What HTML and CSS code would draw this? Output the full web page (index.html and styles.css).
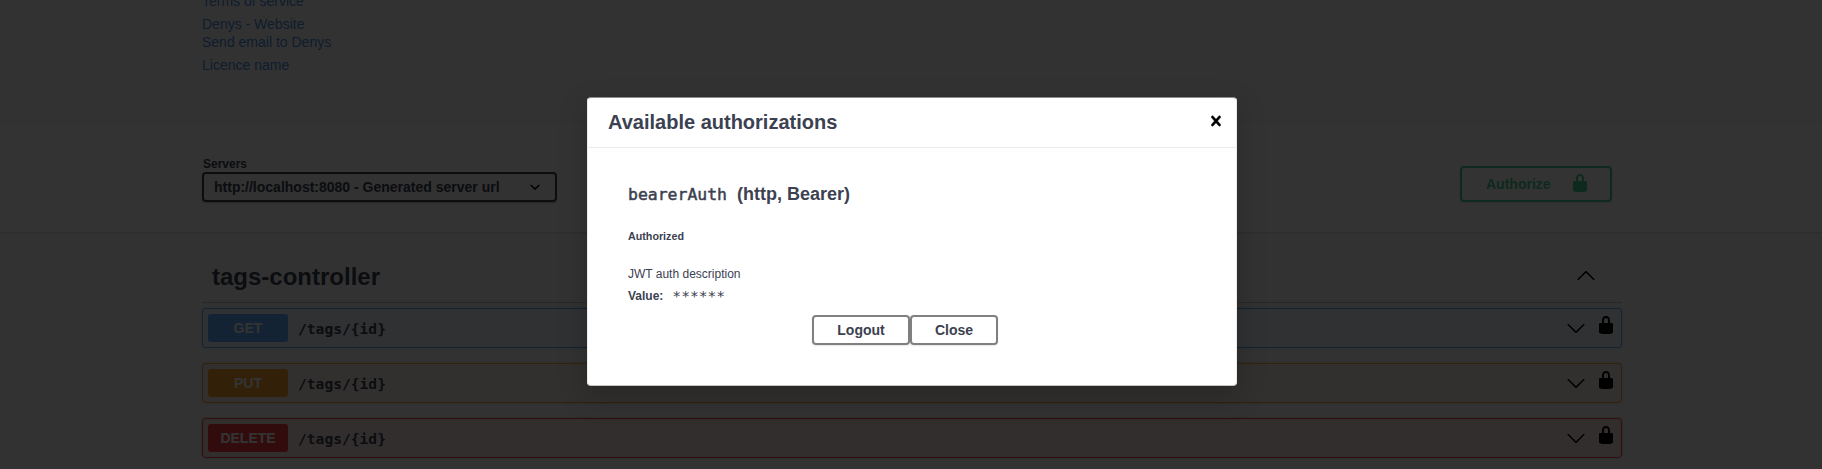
FILE: index.html
```
<!DOCTYPE html>
<html lang="en">
<head>
<meta charset="utf-8">
<title>API documentation</title>
<link rel="stylesheet" href="styles.css">
</head>
<body>
<svg class="sprite">
  <symbol id="lock" viewBox="0 0 20 20"><path d="M15.8 8H14V5.6C14 2.703 12.665 1 10 1 7.334 1 6 2.703 6 5.6V8H4c-.553 0-1 .646-1 1.199V17c0 .549.428 1.139.951 1.307l1.197.387C5.672 18.861 6.55 19 7.1 19h5.8c.549 0 1.428-.139 1.951-.307l1.196-.387c.524-.167.953-.757.953-1.306V9.199C17 8.646 16.352 8 15.8 8zM12 8H8V5.199C8 3.754 8.797 3 10 3c1.203 0 2 .754 2 2.199V8z"/></symbol>
  <symbol id="down" viewBox="0 0 20 20"><path d="M17.418 6.109c.272-.268.709-.268.979 0s.271.701 0 .969l-7.908 7.83c-.27.268-.707.268-.979 0l-7.908-7.83c-.27-.268-.27-.701 0-.969.271-.268.709-.268.979 0L10 13.25l7.418-7.141z"/></symbol>
  <symbol id="up" viewBox="0 0 20 20"><path d="M17.418 14.908c.272.27.709.27.979 0s.271-.71 0-.979l-7.908-7.83c-.27-.268-.707-.268-.979 0l-7.908 7.83c-.27.27-.27.709 0 .979.271.27.709.27.979 0L10 7.767l7.418 7.141z"/></symbol>
  <symbol id="arrow" viewBox="0 0 20 20"><path d="M13.418 7.859c.271-.268.709-.268.978 0 .27.268.272.701 0 .969l-3.908 3.83c-.27.268-.707.268-.979 0l-3.908-3.83c-.27-.267-.27-.701 0-.969.271-.268.709-.268.978 0L10 11l3.418-3.141z"/></symbol>
  <symbol id="close" viewBox="0 0 20 20"><path d="M14.348 14.849c-.469.469-1.229.469-1.697 0L10 11.819l-2.651 3.029c-.469.469-1.229.469-1.697 0-.469-.469-.469-1.229 0-1.697l2.758-3.15-2.759-3.152c-.469-.469-.469-1.228 0-1.697.469-.469 1.228-.469 1.697 0L10 8.183l2.651-3.031c.469-.469 1.228-.469 1.697 0 .469.469.469 1.229 0 1.697l-2.758 3.152 2.758 3.15c.469.469.469 1.229 0 1.698z"/></symbol>
</svg>

<div class="info">
  <a class="terms">Terms of service</a>
  <a class="site">Denys - Website</a>
  <a class="mail">Send email to Denys</a>
  <a class="licence">Licence name</a>
</div>

<div class="scheme">
  <div class="servers">
    <span class="servers-title">Servers</span>
    <div class="select"><span>http://localhost:8080 - Generated server url</span><svg><use href="#arrow"/></svg></div>
  </div>
  <div class="authorize"><span>Authorize</span><svg><use href="#lock"/></svg></div>
</div>

<div class="operations">
  <div class="tag"><h2>tags-controller</h2><svg><use href="#up"/></svg></div>
  <div class="op get"><span class="method">GET</span><code>/tags/{id}</code><svg class="chevron"><use href="#down"/></svg><svg class="lock"><use href="#lock"/></svg></div>
  <div class="op put"><span class="method">PUT</span><code>/tags/{id}</code><svg class="chevron"><use href="#down"/></svg><svg class="lock"><use href="#lock"/></svg></div>
  <div class="op delete"><span class="method">DELETE</span><code>/tags/{id}</code><svg class="chevron"><use href="#down"/></svg><svg class="lock"><use href="#lock"/></svg></div>
</div>

<div class="backdrop">
  <div class="modal">
    <div class="modal-header"><h3>Available authorizations</h3><svg><use href="#close"/></svg></div>
    <div class="modal-body">
      <h4><code>bearerAuth</code><span>(http, Bearer)</span></h4>
      <h6>Authorized</h6>
      <p>JWT auth description</p>
      <div class="value"><label>Value:</label><code>******</code></div>
      <div class="buttons"><button>Logout</button><button class="close-btn">Close</button></div>
    </div>
  </div>
</div>
</body>
</html>
```
FILE: styles.css
```
* { box-sizing: border-box; }
body {
  margin: 0;
  height: 469px;
  overflow: hidden;
  background: #fafafa;
  color: #3b4151;
  font-family: "Liberation Sans", Arial, sans-serif;
}
h2, h3, h4, h6, p { margin: 0; }
svg { display: block; flex: none; }
code { font-family: "DejaVu Sans Mono", monospace; font-weight: 700; }
.sprite { display: none; }

.info {
  height: 124px;
  padding-left: 202px;
  display: flex;
  flex-direction: column;
  color: #4990e2;
  font-size: 14px;
  line-height: 18px;
}
.terms { margin-top: -8px; }
.site { margin-top: 5px; }
.licence { margin-top: 5px; }

.scheme {
  height: 108px;
  padding: 33px 210px 0 202px;
  display: flex;
  justify-content: space-between;
  background: #fff;
  box-shadow: 0 1px 2px rgba(0, 0, 0, .15);
}
.servers-title {
  display: block;
  height: 15px;
  padding-left: 1px;
  font-size: 12px;
  font-weight: 700;
  line-height: 14px;
}
.select {
  width: 355px;
  height: 30px;
  padding: 0 10px;
  display: flex;
  align-items: center;
  justify-content: space-between;
  border: 2px solid #41444e;
  border-radius: 4px;
  background: #f7f7f7;
  box-shadow: 0 1px 2px rgba(0, 0, 0, .25);
  font-size: 14px;
  font-weight: 700;
}
.select svg { width: 20px; height: 20px; }
.authorize {
  width: 152px;
  height: 36px;
  margin-top: 9px;
  padding: 0 20px 0 24px;
  display: flex;
  align-items: center;
  justify-content: space-between;
  border: 2px solid #49cc90;
  border-radius: 4px;
  box-shadow: 0 1px 2px rgba(0, 0, 0, .1);
  color: #49cc90;
  fill: #49cc90;
  font-size: 14px;
  font-weight: 700;
}
.authorize svg { width: 20px; height: 20px; margin-top: -2px; }

.operations { padding: 41px 200px 0 202px; }
.tag {
  height: 30px;
  margin-bottom: 5px;
  padding: 0 26px 0 10px;
  display: flex;
  align-items: center;
  justify-content: space-between;
  border-bottom: 1px solid rgba(59, 65, 81, .3);
}
.tag h2 { font-size: 24px; line-height: 29px; margin-top: -22px; }
.tag svg { width: 20px; height: 20px; margin-top: -25px; }
.op {
  height: 40px;
  margin-bottom: 15px;
  padding: 5px;
  display: flex;
  align-items: center;
  border: 1px solid var(--c);
  border-radius: 4px;
  background: var(--bg);
  box-shadow: 0 0 3px rgba(0, 0, 0, .19);
}
.get { --c: #61affe; --bg: #ebf3fb; }
.put { --c: #fca130; --bg: #fbf1e6; }
.delete { --c: #f93e3e; --bg: #fae7e7; }
.method {
  width: 80px;
  height: 28px;
  border-radius: 3px;
  background: var(--c);
  color: #fff;
  font-size: 14px;
  font-weight: 700;
  line-height: 28px;
  text-align: center;
}
.op code { padding-left: 10px; font-size: 14.62px; }
.chevron { width: 20px; height: 20px; margin-left: auto; }
.lock { width: 20px; height: 20px; margin: -6px 0 0 10px; }

.backdrop {
  position: absolute;
  inset: 0;
  padding: 97px 0 0 587px;
  background: rgba(0, 0, 0, .8);
}
.modal {
  width: 650px;
  height: 289px;
  border: 1px solid #ebebeb;
  border-top-color: #8e8e8e;
  border-bottom-color: #c4c4c4;
  border-radius: 4px;
  background: #fff;
  box-shadow: 0 10px 30px rgba(0, 0, 0, .2);
}
.modal-header {
  height: 50px;
  padding: 0 10px 0 20px;
  display: flex;
  align-items: center;
  justify-content: space-between;
  border-bottom: 1px solid #ebebeb;
}
.modal-header h3 { font-size: 20px; }
.modal-header svg { width: 20px; height: 20px; margin-top: -3px; stroke: #000; stroke-width: .4; }
.modal-body { padding: 34px 40px 0; }
.modal-body h4 { height: 24px; display: flex; align-items: baseline; gap: 10px; font-size: 18px; line-height: 24px; }
.modal-body h4 code { font-size: 16.45px; font-weight: 400; -webkit-text-stroke: .5px #3b4151; }
.modal-body h6 { margin-top: 23px; font-size: 10.72px; line-height: 14px; }
.modal-body p { margin-top: 23px; font-size: 12px; line-height: 16px; }
.value { height: 22px; display: flex; align-items: center; font-size: 12px; }
.value label { font-weight: 700; margin-top: 6px; }
.value code { margin: 5px 0 0 9px; font-size: 14.62px; font-weight: 400; }
.buttons { margin-top: 11px; padding-left: 184px; display: flex; }
button {
  width: 98px;
  height: 30px;
  padding: 0;
  border: 2px solid #808080;
  border-radius: 4px;
  background: transparent;
  box-shadow: 0 1px 2px rgba(0, 0, 0, .1);
  color: #3b4151;
  font: 700 14px "Liberation Sans", Arial, sans-serif;
}
.close-btn { width: 88px; }
```
